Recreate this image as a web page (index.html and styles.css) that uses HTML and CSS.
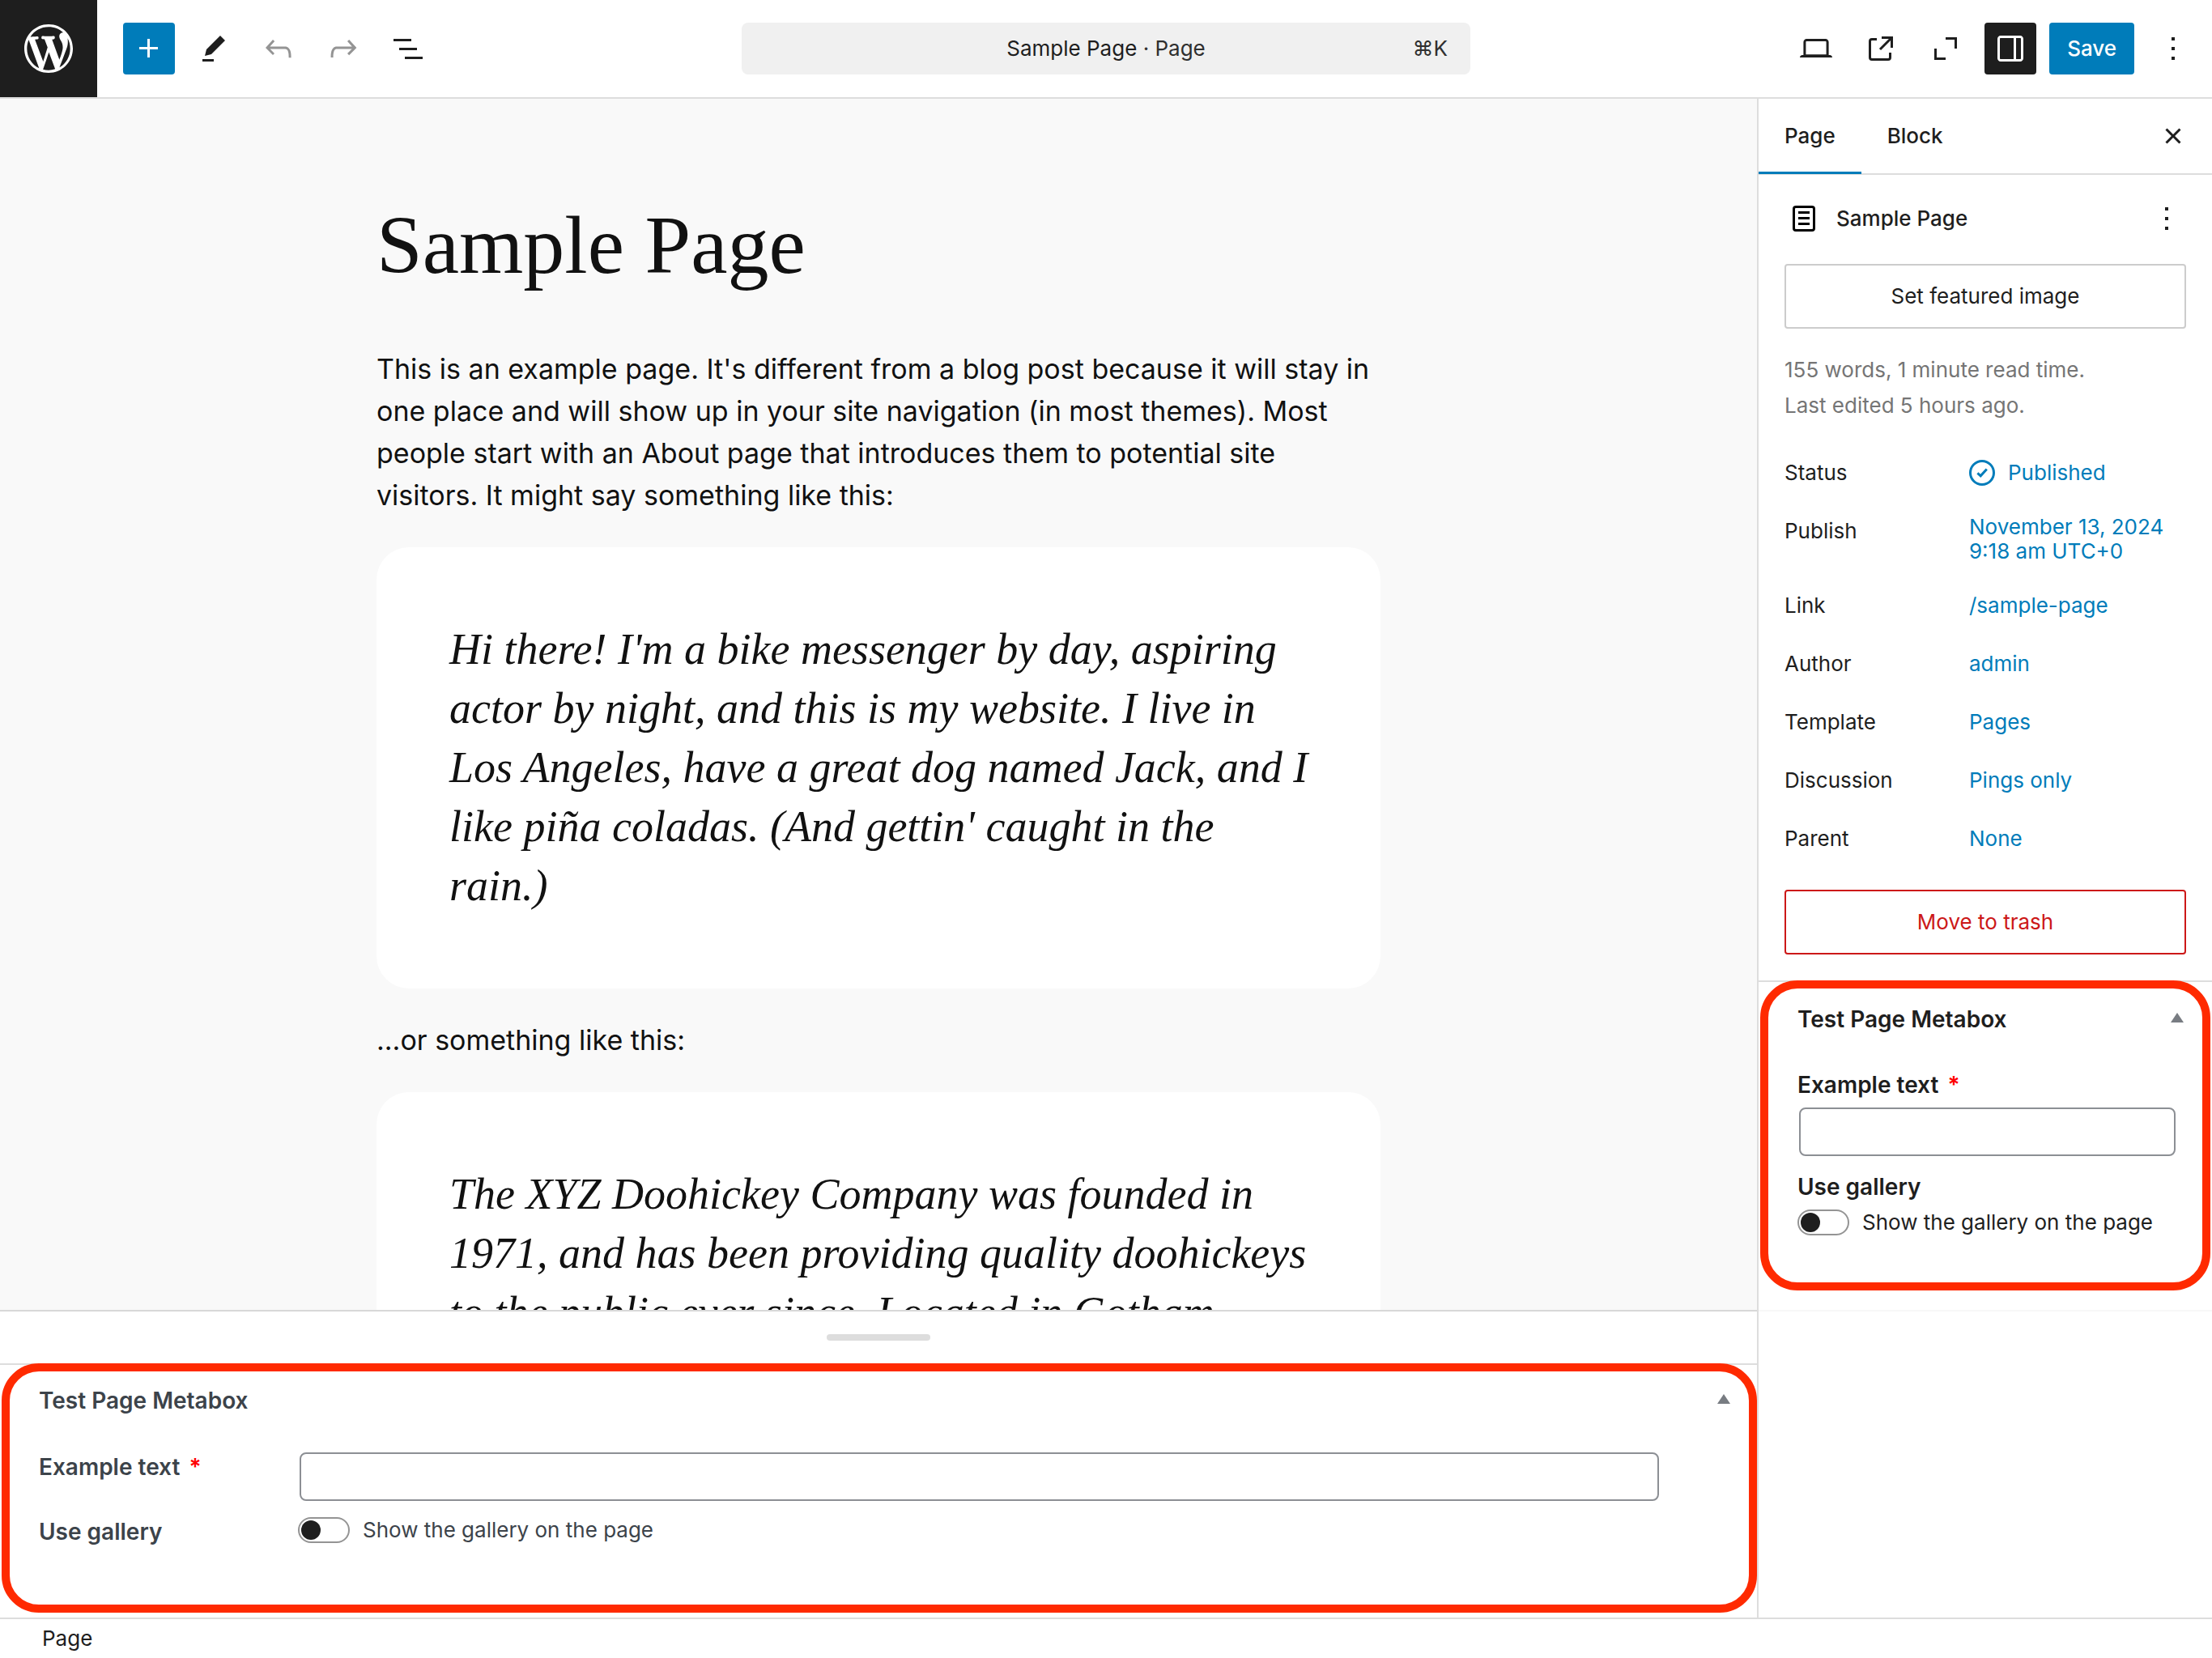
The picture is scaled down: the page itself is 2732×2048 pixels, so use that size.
FILE: index.html
```html
<!DOCTYPE html>
<html lang="en">
<head>
<meta charset="utf-8">
<title>Sample Page</title>
<link rel="stylesheet" href="styles.css">
</head>
<body>
<div class="editor">
  <header class="header">
    <a class="site-icon" href="#" aria-label="View pages">
      <svg class="logo" viewBox="-2 -2 24 24"><path d="M20 10c0-5.51-4.49-10-10-10C4.48 0 0 4.49 0 10c0 5.52 4.48 10 10 10 5.51 0 10-4.48 10-10zM7.78 15.37L4.37 6.22c.55-.02 1.17-.08 1.17-.08.5-.06.44-1.13-.06-1.11 0 0-1.45.11-2.37.11-.18 0-.37 0-.58-.01C4.12 2.69 6.87 1.11 10 1.11c2.33 0 4.45.87 6.05 2.34-.68-.11-1.65.39-1.65 1.58 0 .74.45 1.36.9 2.1.35.61.55 1.36.55 2.46 0 1.49-1.4 5-1.4 5l-3.03-8.37c.54-.02.82-.17.82-.17.5-.05.44-1.25-.06-1.22 0 0-1.44.12-2.38.12-.87 0-2.33-.12-2.33-.12-.5-.03-.56 1.2-.06 1.22l.92.08 1.26 3.41zM17.41 10c.24-.64.74-1.87.43-4.25.7 1.29 1.05 2.71 1.05 4.25 0 3.29-1.73 6.24-4.4 7.78.97-2.59 1.94-5.2 2.92-7.78zM6.1 18.09C3.12 16.65 1.11 13.53 1.11 10c0-1.3.23-2.48.72-3.59C3.25 10.3 4.67 14.2 6.1 18.09zm4.03-6.63l2.58 6.98c-.86.29-1.76.45-2.71.45-.79 0-1.57-.11-2.29-.33.81-2.38 1.62-4.74 2.42-7.1z"/></svg>
    </a>
    <div class="tools">
      <button class="tool tool-primary" type="button" aria-label="Block inserter"><svg class="icon" viewBox="0 0 24 24"><path d="M11 12.5V17.5H12.5V12.5H17.5V11H12.5V6H11V11H6V12.5H11Z"/></svg></button>
      <button class="tool" type="button" aria-label="Tools"><svg class="icon" viewBox="0 0 24 24"><path d="m19 7-3-3-8.5 8.5-1 4 4-1L19 7Zm-7 11.5H5V20h7v-1.5Z"/></svg></button>
      <button class="tool" type="button" aria-label="Undo" disabled><svg class="icon" viewBox="0 0 24 24"><path d="M18.3 11.7c-.6-.6-1.4-.9-2.3-.9H6.7l2.9-3.3-1.1-1-4.5 5L8.5 16l1-1-2.7-2.7H16c.5 0 .9.2 1.3.5 1 1 1 3.4 1 4.5v.3h1.5v-.2c0-1.5 0-4.3-1.5-5.7z"/></svg></button>
      <button class="tool" type="button" aria-label="Redo" disabled><svg class="icon" viewBox="0 0 24 24"><path d="M15.6 6.5l-1.1 1 2.9 3.3H8c-.9 0-1.7.3-2.3.9-1.4 1.5-1.4 4.2-1.4 5.6v.2h1.5v-.3c0-1.1 0-3.5 1-4.5.3-.3.7-.5 1.3-.5h9.2L14.5 15l1.1 1.1 4.6-4.6-4.6-5z"/></svg></button>
      <button class="tool" type="button" aria-label="Document overview"><svg class="icon" viewBox="0 0 24 24"><path d="M3 6h11v1.5H3V6Zm3.5 5.5h11V13h-11v-1.5ZM21 17H10v1.5h11V17Z"/></svg></button>
    </div>
    <button class="command" type="button">
      <span class="command-title">Sample Page <span class="command-type">· Page</span></span>
      <span class="command-key">⌘K</span>
    </button>
    <div class="settings">
      <button class="tool" type="button" aria-label="View"><svg class="icon" viewBox="0 0 24 24"><path d="M20.5 16h-.7V8c0-1.1-.9-2-2-2H6.2c-1.1 0-2 .9-2 2v8h-.7c-.8 0-1.5.7-1.5 1.5h20c0-.8-.7-1.5-1.5-1.5zM5.7 8c0-.3.2-.5.5-.5h11.6c.3 0 .5.2.5.5v7.6H5.7V8z"/></svg></button>
      <button class="tool" type="button" aria-label="View page"><svg class="icon" viewBox="0 0 24 24"><path d="M19.5 4.5h-7V6h4.44l-5.97 5.97 1.06 1.06L18 7.06v4.44h1.5v-7Zm-13 1a2 2 0 0 0-2 2v10a2 2 0 0 0 2 2h10a2 2 0 0 0 2-2v-3H17v3a.5.5 0 0 1-.5.5h-10a.5.5 0 0 1-.5-.5v-10a.5.5 0 0 1 .5-.5h3V5.5h-3Z"/></svg></button>
      <button class="tool" type="button" aria-label="Distraction free"><svg class="icon" viewBox="0 0 24 24"><path d="M12 5h7v7h-1.5V6.5H12zM5 12h1.5v5.5H12V19H5z"/></svg></button>
      <button class="tool tool-pressed" type="button" aria-label="Settings" aria-pressed="true"><svg class="icon" viewBox="0 0 24 24"><path fill-rule="evenodd" d="M18 4H6c-1.1 0-2 .9-2 2v12c0 1.1.9 2 2 2h12c1.1 0 2-.9 2-2V6c0-1.1-.9-2-2-2zm-4 14.5H6c-.3 0-.5-.2-.5-.5V6c0-.3.2-.5.5-.5h8v13zm4.5-.5c0 .3-.2.5-.5.5h-2.5v-13H18c.3 0 .5.2.5.5v12z"/></svg></button>
      <button class="save" type="button">Save</button>
      <button class="tool" type="button" aria-label="Options"><svg class="icon" viewBox="0 0 24 24"><path d="M13 19h-2v-2h2v2zm0-6h-2v-2h2v2zm0-6h-2V5h2v2z"/></svg></button>
    </div>
  </header>

  <div class="body">
    <main class="main">
      <div class="canvas">
        <article class="post">
          <h1 class="post-title">Sample Page</h1>
          <p class="post-text">This is an example page. It's different from a blog post because it will stay in<br>one place and will show up in your site navigation (in most themes). Most<br>people start with an About page that introduces them to potential site<br>visitors. It might say something like this:</p>
          <blockquote class="quote">Hi there! I'm a bike messenger by day, aspiring<br>actor by night, and this is my website. I live in<br>Los Angeles, have a great dog named Jack, and I<br>like piña coladas. (And gettin' caught in the<br>rain.)</blockquote>
          <p class="post-text">...or something like this:</p>
          <blockquote class="quote">The XYZ Doohickey Company was founded in<br>1971, and has been providing quality doohickeys<br>to the public ever since. Located in Gotham</blockquote>
        </article>
      </div>
      <div class="resizer"><span class="resizer-handle"></span></div>
      <section class="metabox metabox-wide">
        <div class="metabox-head">
          <h2 class="metabox-title">Test Page Metabox</h2>
          <button class="metabox-toggle" type="button" aria-label="Toggle panel"><svg class="arrow" viewBox="0 0 16 12"><path d="M8 0 16 12H0z"/></svg></button>
        </div>
        <div class="field">
          <label class="field-label" for="wide-text">Example text <span class="required">*</span></label>
          <input class="field-input" id="wide-text" type="text" required>
        </div>
        <div class="field">
          <span class="field-label">Use gallery</span>
          <label class="switch-label"><input class="switch" type="checkbox">Show the gallery on the page</label>
        </div>
        <span class="highlight"></span>
      </section>
    </main>

    <aside class="sidebar">
      <div class="tabs">
        <button class="tab tab-active" type="button">Page</button>
        <button class="tab" type="button">Block</button>
        <button class="tool tab-close" type="button" aria-label="Close settings"><svg class="icon" viewBox="0 0 24 24"><path d="M12 13.06l3.712 3.713 1.061-1.06L13.061 12l3.712-3.712-1.06-1.06L12 10.938 8.288 7.227l-1.061 1.06L10.939 12l-3.712 3.712 1.06 1.061L12 13.061z"/></svg></button>
      </div>
      <div class="summary">
        <div class="card">
          <svg class="icon card-icon" viewBox="0 0 24 24"><path d="M15.5 7.5h-7V9h7V7.5Zm-7 3.5h7v1.5h-7V11Zm7 3.5h-7V16h7v-1.5Z"/><path fill-rule="evenodd" d="M17 4H7a2 2 0 0 0-2 2v12a2 2 0 0 0 2 2h10a2 2 0 0 0 2-2V6a2 2 0 0 0-2-2ZM7 5.5h10a.5.5 0 0 1 .5.5v12a.5.5 0 0 1-.5.5H7a.5.5 0 0 1-.5-.5V6a.5.5 0 0 1 .5-.5Z"/></svg>
          <h2 class="card-title">Sample Page</h2>
          <button class="card-menu" type="button" aria-label="Actions"><svg class="icon" viewBox="0 0 24 24"><path d="M13 19h-2v-2h2v2zm0-6h-2v-2h2v2zm0-6h-2V5h2v2z"/></svg></button>
        </div>
        <button class="wide-button" type="button">Set featured image</button>
        <p class="info">155 words, 1 minute read time.<br>Last edited 5 hours ago.</p>
        <dl class="rows">
          <div class="row"><dt class="row-name">Status</dt><dd class="row-data"><button class="value" type="button"><svg class="status-icon" viewBox="4 4 16 16"><circle cx="12" cy="12" r="7.25"/><path d="m9.2 12.2 1.9 1.7 3.8-4.2"/></svg>Published</button></dd></div>
          <div class="row"><dt class="row-name">Publish</dt><dd class="row-data row-data-tall"><button class="value" type="button">November 13, 2024<br>9:18 am UTC+0</button></dd></div>
          <div class="row"><dt class="row-name">Link</dt><dd class="row-data"><button class="value" type="button">/sample-page</button></dd></div>
          <div class="row"><dt class="row-name">Author</dt><dd class="row-data"><button class="value" type="button">admin</button></dd></div>
          <div class="row"><dt class="row-name">Template</dt><dd class="row-data"><button class="value" type="button">Pages</button></dd></div>
          <div class="row"><dt class="row-name">Discussion</dt><dd class="row-data"><button class="value" type="button">Pings only</button></dd></div>
          <div class="row"><dt class="row-name">Parent</dt><dd class="row-data"><button class="value" type="button">None</button></dd></div>
        </dl>
        <button class="wide-button wide-button-danger" type="button">Move to trash</button>
      </div>
      <div class="side-panels">
        <section class="metabox metabox-side">
          <div class="metabox-head">
            <h2 class="metabox-title">Test Page Metabox</h2>
            <button class="metabox-toggle" type="button" aria-label="Toggle panel"><svg class="arrow" viewBox="0 0 16 12"><path d="M8 0 16 12H0z"/></svg></button>
          </div>
          <div class="field">
            <label class="field-label" for="side-text">Example text <span class="required">*</span></label>
            <input class="field-input" id="side-text" type="text" required>
          </div>
          <div class="field">
            <span class="field-label">Use gallery</span>
            <label class="switch-label"><input class="switch" type="checkbox">Show the gallery on the page</label>
          </div>
          <span class="highlight"></span>
        </section>
      </div>
    </aside>
  </div>

  <footer class="footer">Page</footer>
</div>
</body>
</html>
```

FILE: styles.css
```css
* {
  box-sizing: border-box;
}

body {
  margin: 0;
  background: #fff;
  color: #1e1e1e;
  font-family: Inter, "Liberation Sans", sans-serif;
  font-size: 26px;
  line-height: 32px;
}

h1, h2, p, dl, dd, blockquote {
  margin: 0;
}

button {
  margin: 0;
  padding: 0;
  border: 0;
  background: none;
  color: inherit;
  font: inherit;
}

.editor {
  display: flex;
  flex-direction: column;
  height: 100vh;
}

.icon {
  display: block;
  width: 48px;
  height: 48px;
  fill: currentColor;
}

/* Header: equal side columns keep the command bar centred */
.header {
  display: grid;
  grid-template-columns: 1fr minmax(0, 900px) 1fr;
  align-items: center;
  flex: none;
  border-bottom: 2px solid #ddd;
}

.site-icon {
  grid-area: 1 / 1;
  justify-self: start;
  display: flex;
  align-items: center;
  justify-content: center;
  width: 120px;
  height: 120px;
  background: #1e1e1e;
}

.logo {
  width: 72px;
  height: 72px;
  fill: #fff;
}

.tools {
  grid-area: 1 / 1;
  display: flex;
  gap: 16px;
  padding-left: 152px;
}

.settings {
  grid-area: 1 / 3;
  display: flex;
  justify-content: flex-end;
  gap: 16px;
  padding-right: 16px;
}

.tool {
  display: flex;
  align-items: center;
  justify-content: center;
  width: 64px;
  height: 64px;
  border-radius: 4px;
}

.tool:disabled {
  color: #949494;
}

.tool-primary {
  background: #007cba;
  color: #fff;
}

.tool-pressed {
  background: #1e1e1e;
  color: #fff;
}

.save {
  height: 64px;
  padding: 0 22px;
  border-radius: 4px;
  background: #007cba;
  color: #fff;
  font-weight: 500;
}

.command {
  grid-area: 1 / 2;
  display: grid;
  grid-template-columns: 1fr auto 1fr;
  align-items: center;
  height: 64px;
  padding: 0 28px;
  border-radius: 8px;
  background: #f0f0f0;
}

.command-title {
  grid-column: 2;
}

.command-type,
.command-key {
  color: #2f2f2f;
}

.command-key {
  justify-self: end;
}

/* Main area */
.body {
  display: flex;
  flex: 1;
  min-height: 0;
}

.main {
  display: flex;
  flex-direction: column;
  flex: 1;
  min-width: 0;
}

.canvas {
  flex: 1;
  min-height: 0;
  overflow: hidden;
  padding-top: 120px;
  background: #f9f9f9;
  color: #111;
}

.post {
  display: flex;
  flex-direction: column;
  gap: 38px;
  max-width: 1240px;
  margin: 0 auto;
}

.post-title {
  margin-bottom: 28px;
  font: 400 102px/122px "Liberation Serif", serif;
}

.post-text {
  font-size: 34px;
  line-height: 52px;
  white-space: nowrap;
}

.quote {
  padding: 90px;
  border-radius: 40px;
  background: #fff;
  font: italic 400 54px/73px "Liberation Serif", serif;
  white-space: nowrap;
}

.resizer {
  display: flex;
  align-items: center;
  justify-content: center;
  flex: none;
  height: 66px;
  border-top: 2px solid #d8d8d8;
}

.resizer-handle {
  width: 128px;
  height: 8px;
  border-radius: 4px;
  background: #ddd;
}

/* Metaboxes */
.metabox {
  position: relative;
  border-top: 2px solid #ddd;
}

.metabox-head {
  display: flex;
  align-items: center;
  justify-content: space-between;
}

.metabox-title,
.field-label {
  font-size: 28px;
  font-weight: 600;
  line-height: 36px;
}

.metabox-toggle {
  display: flex;
  padding-bottom: 4px;
}

.arrow {
  width: 16px;
  height: 12px;
  fill: #787c82;
}

.required {
  margin-left: 4px;
  color: #f00;
}

.field-input {
  height: 60px;
  margin: 0 0 0 2px;
  padding: 0 16px;
  border: 2px solid #8c8f94;
  border-radius: 8px;
  background: #fff;
  font: inherit;
}

.switch-label {
  display: flex;
  align-items: center;
  gap: 16px;
}

.switch {
  appearance: none;
  width: 64px;
  height: 32px;
  margin: 0;
  padding: 2px;
  border: 2px solid #949494;
  border-radius: 16px;
  background: #fff;
}

.switch::before {
  content: "";
  display: block;
  width: 24px;
  height: 24px;
  border-radius: 50%;
  background: #1e1e1e;
}

.highlight {
  position: absolute;
  inset: -2px 0 6px 2px;
  border: 10px solid #ff2a00;
  border-radius: 46px;
  pointer-events: none;
}

.metabox-wide {
  display: flex;
  flex-direction: column;
  gap: 20px;
  flex: none;
  padding: 26px 33px 88px 48px;
  color: #3c434a;
}

.metabox-wide .metabox-head {
  margin-bottom: 26px;
}

.metabox-wide .field {
  display: grid;
  grid-template-columns: 320px 1fr;
  align-items: start;
  padding-right: 88px;
}

.metabox-side {
  padding: 28px 35px 68px 48px;
}

.metabox-side .field {
  display: flex;
  flex-direction: column;
  gap: 10px;
  margin-top: 45px;
  padding-right: 10px;
}

.metabox-side .field + .field {
  margin-top: 20px;
}

.metabox-side .highlight {
  inset: -2px 2px 0;
}

/* Sidebar */
.sidebar {
  flex: none;
  width: 562px;
  border-left: 2px solid #ddd;
}

.tabs {
  display: flex;
  align-items: center;
  height: 94px;
  padding-right: 16px;
  border-bottom: 2px solid #ddd;
}

.tab {
  height: 94px;
  padding: 0 32px;
  font-weight: 500;
}

.tab-active {
  box-shadow: inset 0 -3px #007cba;
}

.tab-close {
  margin-left: auto;
}

.summary {
  padding: 30px 32px 32px;
}

.side-panels {
  padding-bottom: 24px;
  border-bottom: 2px solid #f8f8f8;
}

.card {
  display: flex;
  align-items: center;
  gap: 16px;
  margin-bottom: 32px;
}

.card-icon {
  color: #000;
}

.card-title {
  flex: 1;
  font-size: 26px;
  font-weight: 500;
}

.wide-button {
  display: block;
  width: 100%;
  height: 80px;
  border: 2px solid #ccc;
  border-radius: 4px;
}

.wide-button-danger {
  border-color: #cc1818;
  color: #cc1818;
}

.info {
  margin: 29px 0;
  color: #757575;
  line-height: 44px;
}

.rows {
  display: flex;
  flex-direction: column;
  gap: 8px;
  margin-bottom: 31px;
}

.row {
  display: grid;
  grid-template-columns: 228px 1fr;
}

.row-name {
  line-height: 64px;
}

.row-data {
  display: flex;
  align-items: center;
  min-height: 64px;
}

.row-data-tall {
  min-height: 84px;
}

.value {
  display: flex;
  align-items: center;
  gap: 16px;
  color: #007cba;
  line-height: 30px;
  text-align: left;
  white-space: nowrap;
}

.status-icon {
  width: 32px;
  height: 32px;
  fill: none;
  stroke: currentColor;
  stroke-width: 1.5;
}

/* Footer */
.footer {
  flex: none;
  height: 50px;
  padding-left: 52px;
  border-top: 2px solid #ddd;
  line-height: 48px;
}
```
